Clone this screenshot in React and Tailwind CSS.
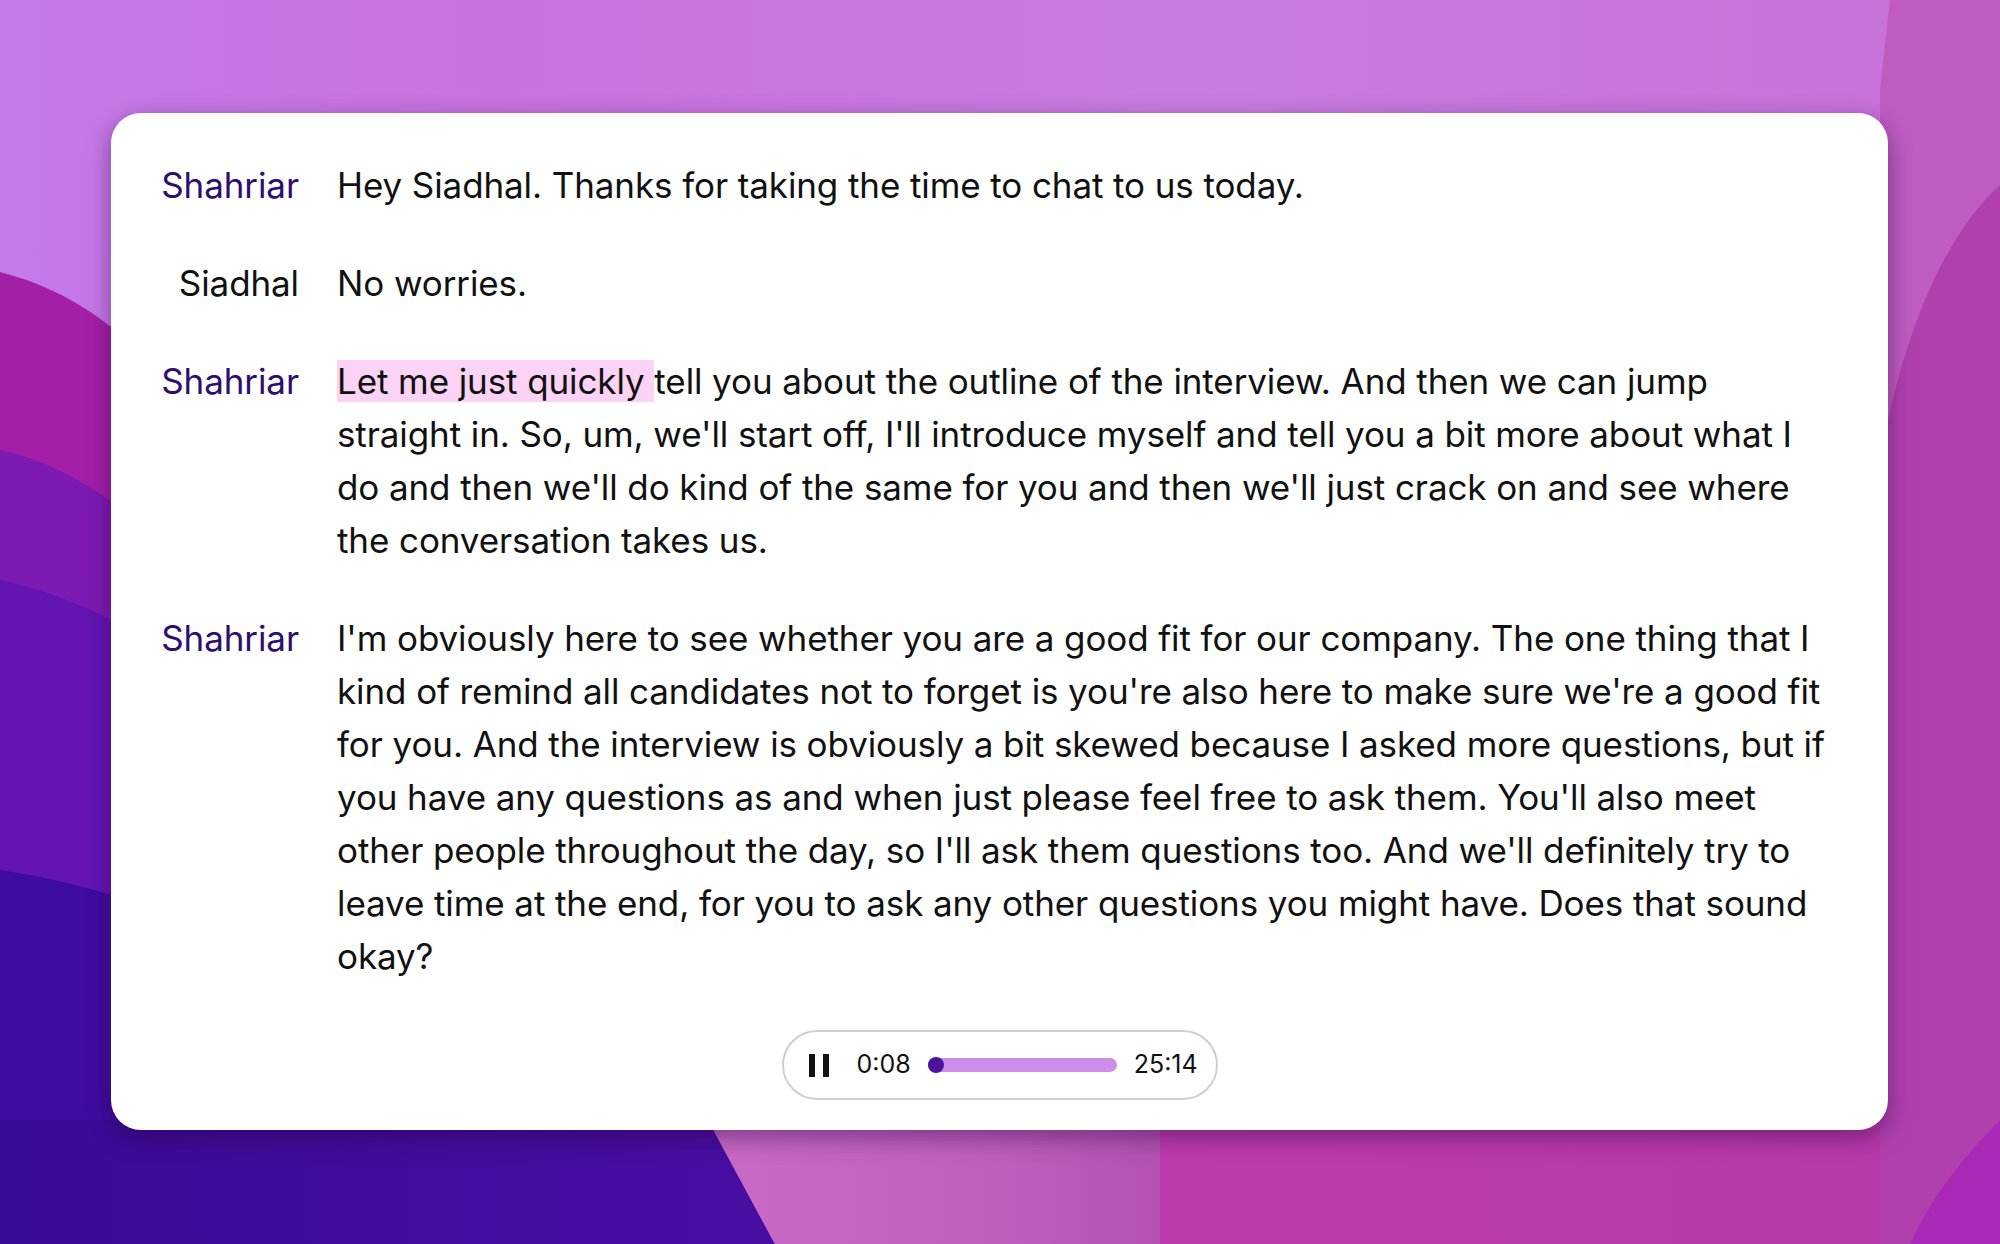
import React from 'react';

const LINES = [
  { speaker: 'Shahriar', host: true, text: 'Hey Siadhal. Thanks for taking the time to chat to us today.' },
  { speaker: 'Siadhal', host: false, text: 'No worries.' },
  {
    speaker: 'Shahriar',
    host: true,
    highlight: 'Let me just quickly ',
    text: "tell you about the outline of the interview. And then we can jump straight in. So, um, we'll start off, I'll introduce myself and tell you a bit more about what I do and then we'll do kind of the same for you and then we'll just crack on and see where the conversation takes us.",
  },
  {
    speaker: 'Shahriar',
    host: true,
    text: "I'm obviously here to see whether you are a good fit for our company. The one thing that I kind of remind all candidates not to forget is you're also here to make sure we're a good fit for you. And the interview is obviously a bit skewed because I asked more questions, but if you have any questions as and when just please feel free to ask them. You'll also meet other people throughout the day, so I'll ask them questions too. And we'll definitely try to leave time at the end, for you to ask any other questions you might have. Does that sound okay?",
  },
];

function Wallpaper() {
  return (
    <svg viewBox="0 0 2000 1244" preserveAspectRatio="none" className="absolute inset-0 w-full h-full">
      <defs>
        <linearGradient id="sky" x1="0" y1="0" x2="1" y2="0">
          <stop offset="0" stopColor="#c47ae9" />
          <stop offset="0.25" stopColor="#c872df" />
          <stop offset="0.6" stopColor="#c87ce2" />
          <stop offset="1" stopColor="#c770d8" />
        </linearGradient>
        <linearGradient id="deep" x1="0" y1="0" x2="1" y2="0">
          <stop offset="0" stopColor="#380b96" />
          <stop offset="1" stopColor="#480ea2" />
        </linearGradient>
        <linearGradient id="wedge" x1="0" y1="0" x2="1" y2="0">
          <stop offset="0" stopColor="#c96ac6" />
          <stop offset="0.6" stopColor="#c060bd" />
          <stop offset="1" stopColor="#b552b2" />
        </linearGradient>
        <linearGradient id="mag" x1="0" y1="0" x2="1" y2="0">
          <stop offset="0" stopColor="#bd3cad" />
          <stop offset="0.85" stopColor="#b83aab" />
          <stop offset="1" stopColor="#a925b8" />
        </linearGradient>
      </defs>
      <rect width="2000" height="1244" fill="url(#sky)" />

      {/* left waves */}
      <path d="M0 272 C70 290 130 330 190 410 L190 1244 L0 1244 Z" fill="#a41fa8" />
      <path d="M0 450 C70 465 130 510 190 570 L190 1244 L0 1244 Z" fill="#7d1ab2" />
      <path d="M0 580 C70 595 130 625 190 670 L190 1244 L0 1244 Z" fill="#6414b3" />
      <path d="M0 870 C70 880 130 900 190 920 L190 1244 L0 1244 Z" fill="#3e0c9e" />

      {/* bottom */}
      <path d="M0 1120 L708 1120 L775 1244 L0 1244 Z" fill="url(#deep)" />
      <path d="M708 1120 L1160 1120 L1160 1244 L775 1244 Z" fill="url(#wedge)" />
      <path d="M1160 1120 L2000 1120 L2000 1244 L1160 1244 Z" fill="url(#mag)" />

      {/* right side */}
      <path d="M1890 0 L2000 0 L2000 1244 L1880 1244 L1880 90 Z" fill="#bf5cc2" />
      <path d="M2000 185 C1950 230 1905 320 1880 460 L1880 1244 L2000 1244 Z" fill="#b140af" />
      <path d="M2000 1120 C1960 1160 1930 1200 1910 1244 L2000 1244 Z" fill="#a928b6" />
    </svg>
  );
}

function PauseIcon() {
  return (
    <svg width="20" height="23" viewBox="0 0 20 23" className="shrink-0">
      <rect x="0" y="0" width="6" height="23" fill="#111" />
      <rect x="14" y="0" width="6" height="23" fill="#111" />
    </svg>
  );
}

function Player() {
  return (
    <div className="mx-auto flex items-center w-[436px] h-[70px] rounded-full border-2 border-[#cfcfcf] bg-white">
      <div className="ml-[25px]">
        <PauseIcon />
      </div>
      <span className="ml-[28px] text-[25px] text-[#111]">0:08</span>
      <div className="ml-[17px] relative w-[189px] h-[14px] rounded-full bg-[#cc8eea]">
        <div className="absolute left-0 top-1/2 -translate-y-1/2 w-[16px] h-[16px] rounded-full bg-[#4a149e]" />
      </div>
      <span className="ml-[17px] text-[25px] text-[#111]">25:14</span>
    </div>
  );
}

export default function App() {
  return (
    <div className="relative w-[2000px] h-[1244px] overflow-hidden" style={{ fontFamily: 'Inter, "Noto Sans", sans-serif' }}>
      <Wallpaper />
      <div className="relative pt-[113px] pl-[111px]">
        <div className="w-[1777px] bg-white rounded-[30px] shadow-[0_8px_24px_rgba(40,0,60,0.45)] pt-[46px] pb-[30px]">
          <div className="flex flex-col gap-[45px] pl-[40px] pr-[57px]">
            {LINES.map((line, i) => (
              <div key={i} className="flex gap-[38px] text-[35px] leading-[53px] tracking-[-0.1px]">
                <div className={`w-[148px] shrink-0 text-right ${line.host ? 'text-[#2c0f6e]' : 'text-[#111]'}`}>
                  {line.speaker}
                </div>
                <p className="flex-1 text-[#111]">
                  {line.highlight && <span className="bg-[#fbd3f5]">{line.highlight}</span>}
                  {line.text}
                </p>
              </div>
            ))}
          </div>
          <div className="mt-[47px]">
            <Player />
          </div>
        </div>
      </div>
    </div>
  );
}
